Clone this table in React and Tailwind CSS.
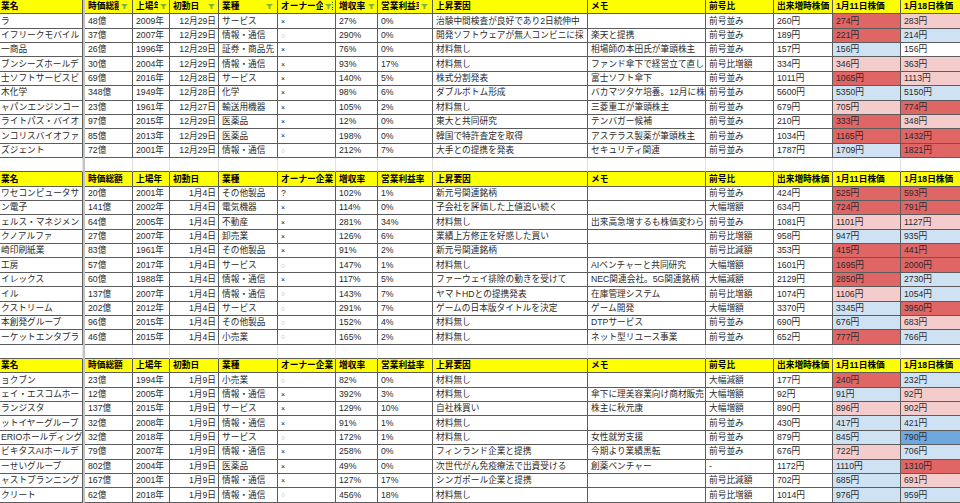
import React from 'react';

// column widths (px) taken from the sheet grid
const COLS = [
  'w-[83px]',
  'w-[48px]',
  'w-[37px]',
  'w-[49px]',
  'w-[59px]',
  'w-[58px]',
  'w-[42px]',
  'w-[55px]',
  'w-[155px]',
  'w-[118px]',
  'w-[68px]',
  'w-[59px]',
  'w-[68px]',
  'w-[68px]',
];

const HEAD = ['業名', '時価総額', '上場年', '初動日', '業種', 'オーナー企業', '増収率', '営業利益率', '上昇要因', 'メモ', '前号比', '出来増時株価', '1月11日株価', '1月18日株価'];

// right offset of the filter button per column (first block only)
const FILTERS = {
  1: 'right-[4px]',
  2: 'right-[2px]',
  3: 'right-[3px]',
  4: 'right-[4px]',
  5: 'right-[3px]',
  6: 'right-[2px]',
  7: 'right-[4px]',
};

const BG = {
  r: 'bg-[#e06666]',
  p: 'bg-[#f4cccc]',
  b: 'bg-[#cfe2f3]',
  d: 'bg-[#6fa8dc]',
  w: 'bg-white',
};

const SECTIONS = [
  {
    filters: true,
    rows: [
      ['ラ', '48億', '2009年', '12月29日', 'サービス', '×', '27%', '0%', '治験中間検査が良好であり2日続伸中', '', '前号並み', '260円', '274円', '283円', 'r', 'p'],
      ['イフリークモバイル', '37億', '2007年', '12月29日', '情報・通信', '○', '290%', '0%', '開発ソフトウェアが無人コンビニに採', '楽天と提携', '前号並み', '189円', '221円', '214円', 'r', 'b'],
      ['一商品', '26億', '1996年', '12月29日', '証券・商品先', '×', '76%', '0%', '材料無し', '相場師の本田氏が筆頭株主', '前号並み', '157円', '156円', '156円', 'b', 'w'],
      ['ブンシーズホールデ', '30億', '2004年', '12月29日', '情報・通信', '×', '93%', '17%', '材料無し', 'ファンド傘下で経営立て直し', '前号比増額', '334円', '346円', '363円', 'p', 'p'],
      ['士ソフトサービスビ', '69億', '2016年', '12月28日', 'サービス', '×', '140%', '5%', '株式分割発表', '富士ソフト傘下', '前号並み', '1011円', '1065円', '1113円', 'r', 'p'],
      ['木化学', '348億', '1949年', '12月28日', '化学', '×', '98%', '6%', 'ダブルボトム形成', 'バカマツタケ培養。12月に株', '前号並み', '5600円', '5350円', '5150円', 'b', 'b'],
      ['ャパンエンジンコー', '23億', '1961年', '12月27日', '輸送用機器', '×', '105%', '2%', '材料無し', '三菱重工が筆頭株主', '前号並み', '679円', '705円', '774円', 'p', 'r'],
      ['ライトパス・バイオ', '97億', '2015年', '12月29日', '医薬品', '×', '12%', '0%', '東大と共同研究', 'テンバガー候補', '前号並み', '210円', '333円', '348円', 'r', 'p'],
      ['ンコリスバイオファ', '85億', '2013年', '12月29日', '医薬品', '×', '198%', '0%', '韓国で特許査定を取得', 'アステラス製薬が筆頭株主', '前号並み', '1034円', '1165円', '1432円', 'r', 'r'],
      ['ズジェント', '72億', '2001年', '12月29日', '情報・通信', '○', '212%', '7%', '大手との提携を発表', 'セキュリティ関連', '前号並み', '1787円', '1709円', '1821円', 'b', 'r'],
    ],
  },
  {
    filters: false,
    rows: [
      ['ワセコンピュータサ', '20億', '2001年', '1月4日', 'その他製品', '?', '102%', '1%', '新元号関連銘柄', '', '前号並み', '424円', '525円', '593円', 'r', 'r'],
      ['ン電子', '141億', '2002年', '1月4日', '電気機器', '×', '114%', '0%', '子会社を評価した上値追い続く', '', '大幅増額', '634円', '724円', '791円', 'r', 'r'],
      ['ェルス・マネジメン', '64億', '2005年', '1月4日', '不動産', '×', '281%', '34%', '材料無し', '出来高急増するも株価変わら', '前号並み', '1081円', '1101円', '1127円', 'p', 'p'],
      ['クノアルファ', '27億', '2007年', '1月4日', '卸売業', '×', '126%', '6%', '業績上方修正を好感した買い', '', '前号比増額', '958円', '947円', '935円', 'b', 'b'],
      ['崎印刷紙業', '83億', '1961年', '1月4日', 'その他製品', '×', '91%', '2%', '新元号関連銘柄', '', '前号比減額', '353円', '415円', '441円', 'r', 'r'],
      ['工房', '57億', '2017年', '1月4日', 'サービス', '○', '147%', '1%', '材料無し', 'AIベンチャーと共同研究', '大幅増額', '1601円', '1695円', '2000円', 'r', 'r'],
      ['イレックス', '60億', '1988年', '1月4日', '情報・通信', '×', '117%', '5%', 'ファーウェイ排除の動きを受けて', 'NEC関連会社。5G関連銘柄', '大幅減額', '2129円', '2850円', '2730円', 'r', 'b'],
      ['イル', '137億', '2007年', '1月4日', '情報・通信', '○', '143%', '7%', 'ヤマトHDとの提携発表', '在庫管理システム', '前号比増額', '1074円', '1106円', '1054円', 'p', 'b'],
      ['クストリーム', '202億', '2012年', '1月4日', 'サービス', '○', '291%', '7%', 'ゲームの日本版タイトルを決定', 'ゲーム開発', '大幅増額', '3370円', '3345円', '3950円', 'b', 'r'],
      ['本創発グループ', '96億', '2015年', '1月4日', 'その他製品', '○', '152%', '4%', '材料無し', 'DTPサービス', '前号並み', '690円', '676円', '683円', 'b', 'p'],
      ['ーケットエンタプラ', '46億', '2015年', '1月4日', '小売業', '○', '165%', '2%', '材料無し', 'ネット型リユース事業', '前号並み', '652円', '777円', '766円', 'r', 'b'],
    ],
  },
  {
    filters: false,
    rows: [
      ['ョクブン', '23億', '1994年', '1月9日', '小売業', '○', '82%', '0%', '材料無し', '', '大幅減額', '177円', '240円', '232円', 'r', 'b'],
      ['ェイ・エスコムホー', '12億', '2005年', '1月9日', '情報・通信', '×', '392%', '3%', '材料無し', '傘下に理美容業向け商材販売', '大幅増額', '92円', '91円', '92円', 'b', 'p'],
      ['ランジスタ', '137億', '2015年', '1月9日', 'サービス', '×', '129%', '10%', '自社株買い', '株主に秋元康', '大幅増額', '890円', '896円', '902円', 'p', 'p'],
      ['ットイヤーグループ', '32億', '2008年', '1月9日', '情報・通信', '×', '91%', '1%', '材料無し', '', '前号並み', '430円', '417円', '421円', 'b', 'b'],
      ['ERIOホールディング', '32億', '2018年', '1月9日', 'サービス', '○', '172%', '1%', '材料無し', '女性就労支援', '前号並み', '879円', '845円', '790円', 'b', 'd'],
      ['ビキタスAIホールデ', '79億', '2007年', '1月9日', '情報・通信', '×', '258%', '0%', 'フィンランド企業と提携', '今期より業績黒転', '前号並み', '676円', '722円', '706円', 'p', 'b'],
      ['ーせいグループ', '802億', '2004年', '1月9日', '医薬品', '×', '49%', '0%', '次世代がん免疫療法で出資受ける', '創薬ベンチャー', '-', '1172円', '1110円', '1310円', 'b', 'r'],
      ['ャストプランニング', '167億', '2001年', '1月9日', '情報・通信', '×', '127%', '17%', 'シンガポール企業と提携', '', '前号比減額', '702円', '685円', '691円', 'b', 'p'],
      ['クリート', '62億', '2018年', '1月9日', '情報・通信', '○', '456%', '18%', '材料無し', '', '前号比増額', '1014円', '976円', '959円', 'b', 'b'],
    ],
  },
];

const FilterIcon = () => (
  <svg width="7" height="5" viewBox="0 0 7 5">
    <polygon points="0,0 7,0 4.4,2.6 4.4,5 2.6,5 2.6,2.6" fill="#7bb33f" />
  </svg>
);

// frozen-column divider after the name column
const Divider = () => <div className="w-[2px] shrink-0 bg-[#c2c2c2]" />;

const cellBase = 'flex items-center shrink-0 overflow-hidden whitespace-nowrap border-r border-b';

function HeaderRow({ filters }) {
  return (
    <div className="flex h-[14.37px]">
      {HEAD.map((h, i) => (
        <React.Fragment key={i}>
          <div className={`${cellBase} relative border-[#5c5c5c] bg-[#ffff00] font-bold text-black ${COLS[i]} ${i === 0 ? 'pl-[1px]' : 'pl-[3px]'}`}>
            {h}
            {filters && FILTERS[i] && (
              <span className={`absolute top-0 bottom-0 flex items-center bg-[#ffff00] pl-[2px] ${FILTERS[i]}`}>
                <FilterIcon />
              </span>
            )}
          </div>
          {i === 0 && <Divider />}
        </React.Fragment>
      ))}
    </div>
  );
}

function DataRow({ r }) {
  return (
    <div className="flex h-[14.37px]">
      {r.slice(0, 14).map((v, i) => {
        let extra = 'pl-[3px]';
        if (i === 0) extra = 'pl-[1px]';
        if (i === 3) extra = 'justify-end pr-[2px]';
        let bg = 'bg-white';
        if (i === 12) bg = BG[r[14]];
        if (i === 13) bg = BG[r[15]];
        let content = v;
        if (i === 5 && v === '○') content = <span className="text-[7px] text-[#a8a8a8]">○</span>;
        if (i === 5 && v === '×') content = <span className="text-[7px] text-[#222]">×</span>;
        return (
          <React.Fragment key={i}>
            <div className={`${cellBase} border-[#5c5c5c] text-[#2a2a2a] ${COLS[i]} ${extra} ${bg}`}>{content}</div>
            {i === 0 && <Divider />}
          </React.Fragment>
        );
      })}
    </div>
  );
}

function EmptyRow() {
  return (
    <div className="flex h-[14.37px]">
      {COLS.map((w, i) => (
        <React.Fragment key={i}>
          <div className={`shrink-0 border-r border-b border-r-[#e2e2e2] border-b-[#5c5c5c] bg-white ${w}`} />
          {i === 0 && <Divider />}
        </React.Fragment>
      ))}
    </div>
  );
}

export default function App() {
  return (
    <div className="w-[960px] h-[503px] overflow-hidden bg-white font-['Liberation_Sans','Noto_Sans_CJK_JP',sans-serif] text-[8.7px] leading-none">
      {SECTIONS.map((s, si) => (
        <div key={si} className="flex flex-col">
          {si > 0 && <EmptyRow />}
          <HeaderRow filters={s.filters} />
          {s.rows.map((r, ri) => (
            <DataRow key={ri} r={r} />
          ))}
        </div>
      ))}
    </div>
  );
}
